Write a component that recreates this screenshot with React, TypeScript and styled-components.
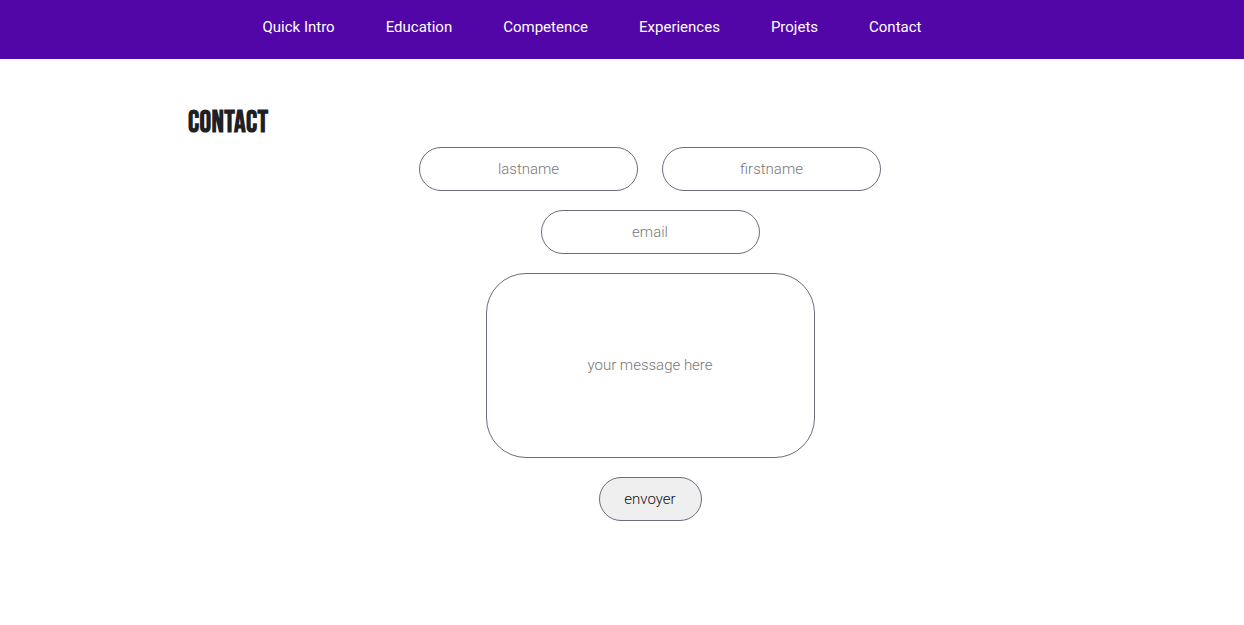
import React from 'react';
import styled, { createGlobalStyle } from 'styled-components';

const GlobalStyle = createGlobalStyle`
  body {
    margin: 0;
    background: #ffffff;
    font-family: Roboto, 'Liberation Sans', sans-serif;
  }
`;

const NavBar = styled.nav`
  box-sizing: border-box;
  height: 59px;
  background-color: #5206a8;
  display: flex;
  justify-content: center;
  align-items: center;
  padding: 0 60px 6px 0;
`;

const NavList = styled.ul`
  display: flex;
  gap: 51px;
  list-style: none;
  margin: 0;
  padding: 0;
`;

const NavLink = styled.a`
  color: #ffffff;
  font-size: 15px;
  font-weight: 400;
  text-decoration: none;
  cursor: pointer;
`;

const Section = styled.section`
  margin-left: 188px;
  width: 924px;
  padding-top: 44px;
`;

const Title = styled.h2`
  margin: 0 0 10px;
  font-family: 'Bebas Neue', 'DejaVu Sans Condensed', 'Liberation Sans Narrow', sans-serif;
  font-stretch: condensed;
  font-weight: 700;
  font-size: 29px;
  letter-spacing: 0.4px;
  color: #1f1f24;
  text-transform: uppercase;
  line-height: 34px;
  transform: translateY(3px) scaleY(1.08);
  transform-origin: left center;
`;

const Form = styled.form`
  display: flex;
  flex-direction: column;
  align-items: center;
  gap: 19px;
`;

const Row = styled.div`
  display: flex;
  gap: 24px;
`;

const Field = styled.input`
  box-sizing: border-box;
  width: 219px;
  height: 44px;
  border: 1px solid #6e6b7b;
  border-radius: 22px;
  background: #fff;
  text-align: center;
  font-family: Roboto, sans-serif;
  font-weight: 300;
  font-size: 15px;
  color: #333;
  outline: none;

  &::placeholder {
    color: #777777;
  }
`;

const Message = styled.textarea`
  box-sizing: border-box;
  display: block;
  width: 329px;
  height: 185px;
  border: 1px solid #6e6b7b;
  border-radius: 40px;
  resize: none;
  text-align: center;
  padding-top: 82px;
  font-family: Roboto, sans-serif;
  font-weight: 300;
  font-size: 15px;
  outline: none;

  &::placeholder {
    color: #777777;
  }
`;

const SendButton = styled.button`
  box-sizing: border-box;
  width: 103px;
  height: 44px;
  border: 1px solid #6e6b7b;
  border-radius: 22px;
  background: #efefef;
  font-family: Roboto, sans-serif;
  font-weight: 300;
  font-size: 15px;
  color: #111;
  cursor: pointer;
`;

const links = ['Quick Intro', 'Education', 'Competence', 'Experiences', 'Projets', 'Contact'];

export default function App() {
  return (
    <>
      <GlobalStyle />
      <NavBar>
        <NavList>
          {links.map((l) => (
            <li key={l}>
              <NavLink>{l}</NavLink>
            </li>
          ))}
        </NavList>
      </NavBar>
      <Section>
        <Title>Contact</Title>
        <Form onSubmit={(e) => e.preventDefault()}>
          <Row>
            <Field placeholder="lastname" />
            <Field placeholder="firstname" />
          </Row>
          <Field type="email" placeholder="email" />
          <Message placeholder="your message here" />
          <SendButton type="submit">envoyer</SendButton>
        </Form>
      </Section>
    </>
  );
}
